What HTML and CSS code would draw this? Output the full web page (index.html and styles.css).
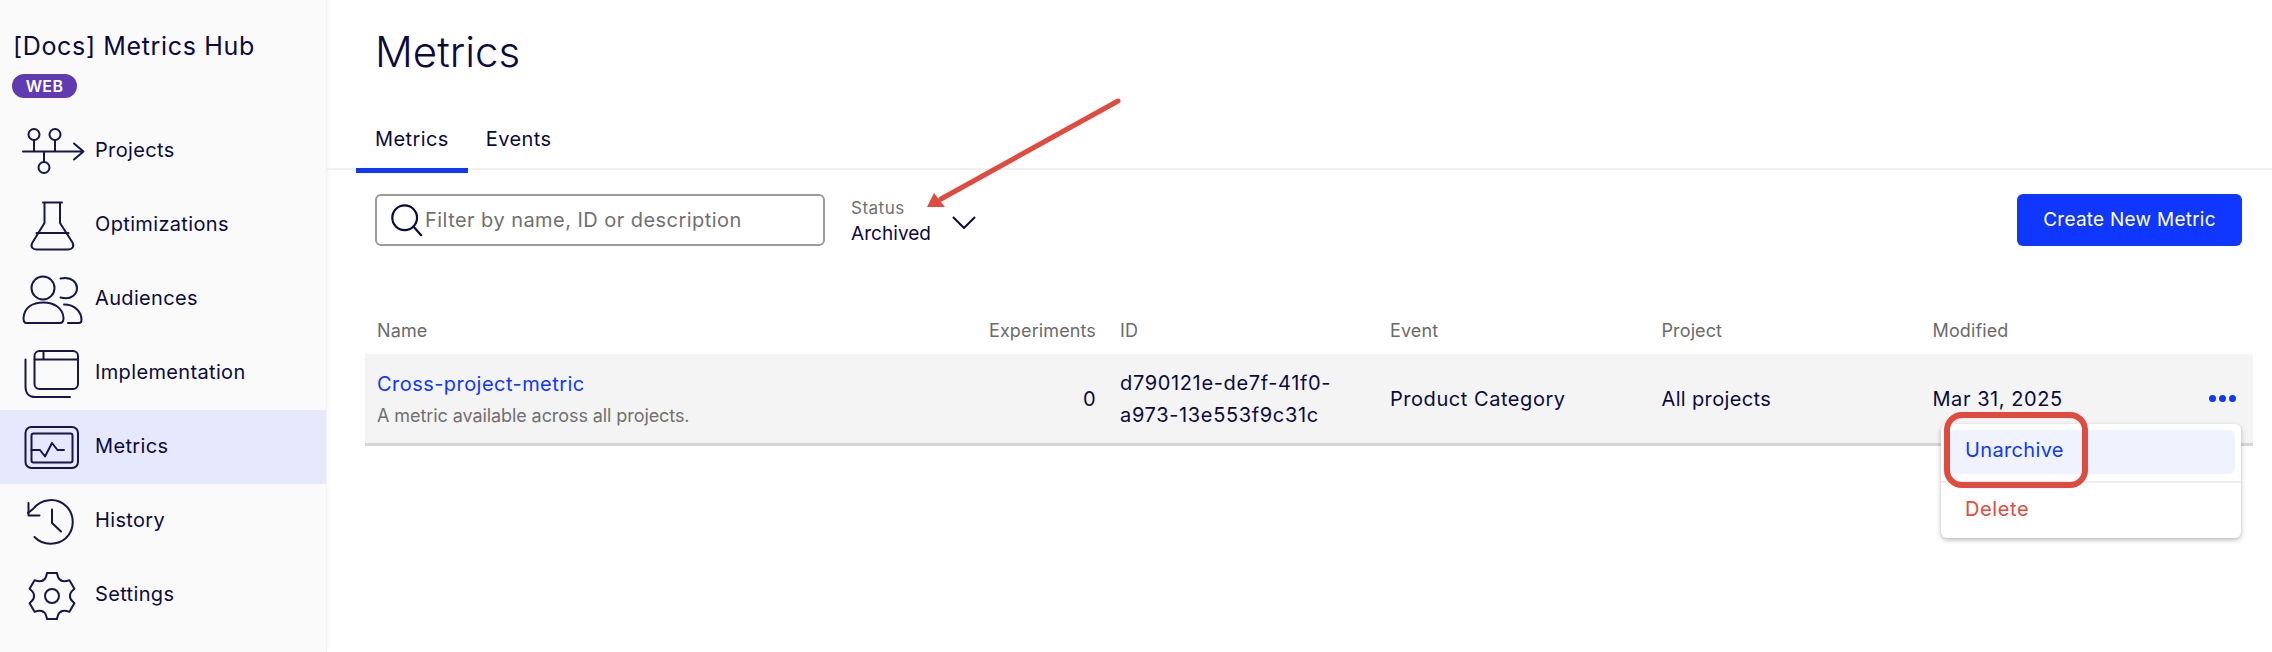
FILE: index.html
```html
<!DOCTYPE html>
<html lang="en">
<head>
<meta charset="utf-8">
<title>Metrics</title>
<link rel="stylesheet" href="styles.css">
</head>
<body>
<div class="app">
  <aside class="sidebar">
    <div class="brand">[Docs] Metrics Hub</div>
    <span class="badge">WEB</span>
    <nav class="nav">
      <a class="nav-item">
        <svg class="nav-icon" viewBox="0 2 68 74"><path d="M3 39.5H63M54 31.5l9.500 8-9.500 8M14 39.500V28M35 39.500V28M24 39.500V50"/><circle cx="14" cy="22.500" r="5.500"/><circle cx="35" cy="22.500" r="5.500"/><circle cx="24" cy="55.500" r="5.500"/></svg>
        <span class="nav-label">Projects</span>
      </a>
      <a class="nav-item">
        <svg class="nav-icon" viewBox="0 2 68 74"><path d="M23 16.500H42M24.500 16.500V37L12.500 56.500C10 60.500 12.500 63.500 16.500 63.500H48C52.500 63.500 54.500 60.500 52.500 56.500L40 37V16.500M16.500 47H48.500"/></svg>
        <span class="nav-label">Optimizations</span>
      </a>
      <a class="nav-item">
        <svg class="nav-icon" viewBox="0 2 68 74"><circle cx="23" cy="28" r="11.500"/><path d="M40.500 18.500C53 16 57 24 57 28C57 33.500 52 40.500 40.500 37.500M6.500 63C4 63 3.500 61 3.500 58C4.500 47 13 42.500 23.500 42.500C34 42.500 43 48 43.500 58C43.500 61 42.500 63 40 63ZM44 44.500C55 44.500 61.500 52 61.500 60C61.500 62 61 63 59 63H48"/></svg>
        <span class="nav-label">Audiences</span>
      </a>
      <a class="nav-item">
        <svg class="nav-icon" viewBox="0 2 68 74"><rect x="14.500" y="17" width="43.500" height="38" rx="5"/><path d="M14.500 25.500H58M23.500 17V25.500M5.500 25.500V53C5.500 59 9 63 15 63H50"/></svg>
        <span class="nav-label">Implementation</span>
      </a>
      <a class="nav-item active">
        <svg class="nav-icon" viewBox="0 0 68 74"><rect x="5.500" y="17" width="52.500" height="41" rx="6"/><rect x="11.500" y="23.500" width="41" height="29" rx="2"/><path d="M11.500 40H20L25 46.500L32 33L37.500 40H44"/></svg>
        <span class="nav-label">Metrics</span>
      </a>
      <a class="nav-item">
        <svg class="nav-icon" viewBox="0 2 68 74"><path d="M14.500 55C23 64 38 63.500 46 56C55 47.500 55 32.500 46 24C37 15.500 21.500 16 13 27L8 31"/><path d="M8.500 21V33.500H19.500M32 27.500V41L41 49.500"/></svg>
        <span class="nav-label">History</span>
      </a>
      <a class="nav-item">
        <svg class="nav-icon" viewBox="0 2 68 74">
          <g transform="translate(32 40)">
            <circle r="7"/>
            <path id="t" d="M-9 -15.600Q-6 -17-5 -23H5Q6 -17 9 -15.600"/>
            <use href="#t" transform="rotate(60)"/>
            <use href="#t" transform="rotate(120)"/>
            <use href="#t" transform="rotate(180)"/>
            <use href="#t" transform="rotate(240)"/>
            <use href="#t" transform="rotate(300)"/>
          </g>
        </svg>
        <span class="nav-label">Settings</span>
      </a>
    </nav>
  </aside>
  <main class="main">
    <h1 class="title">Metrics</h1>
    <div class="tabs">
      <a class="tab active">Metrics</a>
      <a class="tab">Events</a>
    </div>
    <div class="toolbar">
      <label class="search">
        <svg class="search-icon" viewBox="0 0 36 36"><circle cx="16" cy="15" r="13.500"/><path d="M25.500 24.500L34 34"/></svg>
        <span class="placeholder">Filter by name, ID or description</span>
      </label>
      <div class="status">
        <span class="status-label">Status</span>
        <span class="status-value">Archived</span>
      </div>
      <svg class="chevron" viewBox="0 0 24 13"><path d="M1 1L12 12L23 1"/></svg>
      <button class="create">Create New Metric</button>
    </div>
    <div class="table">
      <div class="grid head">
        <div class="cell">Name</div>
        <div class="cell num">Experiments</div>
        <div class="cell">ID</div>
        <div class="cell">Event</div>
        <div class="cell">Project</div>
        <div class="cell">Modified</div>
        <div class="cell"></div>
      </div>
      <div class="grid row">
        <div class="cell">
          <a class="metric-link">Cross-project-metric</a>
          <div class="metric-desc">A metric available across all projects.</div>
        </div>
        <div class="cell num">0</div>
        <div class="cell id">d790121e-de7f-41f0-<br>a973-13e553f9c31c</div>
        <div class="cell wide">Product Category</div>
        <div class="cell">All projects</div>
        <div class="cell wide">Mar 31, 2025</div>
        <div class="cell dots"><i></i><i></i><i></i></div>
        <div class="menu">
          <div class="menu-item hover">Unarchive</div>
          <div class="menu-sep"></div>
          <div class="menu-item danger">Delete</div>
          <div class="callout"></div>
        </div>
      </div>
    </div>
  </main>
  <svg class="arrow" viewBox="0 0 200 120"><path class="arrow-line" d="M193 6L16 104"/><path class="arrow-head" d="M2 112L9 98L20 112Z"/></svg>
</div>
</body>
</html>
```
FILE: styles.css
```css
* { box-sizing: border-box; }
html, body { margin: 0; height: 652px; overflow: hidden; background: #fff; }
body { font-family: Inter, "Liberation Sans", sans-serif; color: #0a0a3c; font-size: 20px; letter-spacing: .35px; }
.app { display: flex; height: 652px; position: relative; }
.sidebar { width: 327px; flex: none; background: #fafafa; border-right: 1px solid #f3f3f3; box-shadow: 1px 0 4px rgba(0,0,0,.04); }
.brand { font-size: 25px; line-height: 30px; margin: 31px 0 0 13px; letter-spacing: .65px; }
.badge { display: block; width: 65px; height: 24px; margin: 13px 0 0 12px; border-radius: 12px; background: #5f3ab0; color: #fff; font-size: 16px; font-weight: 600; line-height: 24px; text-align: center; }
.nav { margin-top: 16px; }
.nav-item { display: flex; align-items: center; height: 74px; padding-left: 20px; gap: 7px; }
.nav-item.active { background: #e6e9fd; }
.nav-label { margin-bottom: 3px; }
.nav-icon { width: 68px; height: 74px; flex: none; fill: none; stroke: #16164a; stroke-width: 2; stroke-linecap: round; stroke-linejoin: round; }
.main { flex: 1; min-width: 0; }
.title { margin: 0; height: 110px; padding: 22px 0 0 375px; margin-left: -327px; font-size: 42px; line-height: 60px; font-weight: 300; letter-spacing: 0; }
.tabs { display: flex; height: 60px; border-bottom: 2px solid #f0f0f0; padding-left: 29px; }
.tab { height: 63px; padding: 15px 19px 0; line-height: 28px; border-bottom: 5px solid transparent; margin-right: -1px; letter-spacing: .4px; }
.tab.active { border-bottom-color: #0f37ff; }
.toolbar { display: flex; align-items: center; height: 52px; margin-top: 24px; padding: 0 30px 0 48px; }
.search { display: flex; align-items: center; width: 450px; height: 52px; border: 2px solid #9b9b9b; border-radius: 6px; padding-left: 13px; gap: 2px; color: #707070; letter-spacing: .45px; }
.search-icon { width: 33px; height: 33px; fill: none; stroke: #0a0a3c; stroke-width: 2.400; stroke-linecap: round; }
.status { display: flex; flex-direction: column; margin-left: 26px; padding-top: 2px; }
.status-label { font-size: 17px; line-height: 25px; color: #707070; letter-spacing: .5px; }
.status-value { font-size: 19px; line-height: 25px; letter-spacing: .05px; }
.chevron { width: 24px; height: 13px; margin: 4px 0 0 21px; fill: none; stroke: #0a0a3c; stroke-width: 2; }
.create { margin-left: auto; width: 225px; height: 52px; border: 0; border-radius: 6px; background: #0f37ff; color: #fff; font: 400 19px/52px Inter, sans-serif; letter-spacing: .25px; padding: 0; }
.table { margin: 0 19px 0 38px; }
.grid { display: grid; grid-template-columns: 595px 148px 270px 271.500px 271px 232px 0; align-items: center; }
.head { height: 108px; align-content: end; padding-bottom: 9px; font-size: 18px; color: #6b6b6b; letter-spacing: .12px; }
.head .cell { line-height: 28px; }
.cell { padding: 0 12px; }
.num { text-align: right; }
.wide { letter-spacing: .55px; }
.row { height: 92px; background: #f4f4f4; border-bottom: 3px solid #d5d5d5; position: relative; grid-template-rows: 89px; }
.metric-link { display: block; color: #0f37ff; line-height: 30px; margin-top: 1px; letter-spacing: .45px; }
.metric-desc { font-size: 18px; line-height: 28px; color: #707070; margin-top: 3px; letter-spacing: -.08px; }
.id { line-height: 32px; letter-spacing: .65px; }
.dots { position: absolute; right: 17px; top: 41px; display: flex; gap: 3px; padding: 0; }
.dots i { width: 7px; height: 7px; border-radius: 50%; background: #0f37ff; }
.menu { position: absolute; top: 70px; right: 12px; width: 300px; height: 114px; background: #fff; border-radius: 6px; box-shadow: 0 2px 5px rgba(0,0,0,.28); padding: 6px 6px 0 8px; }
.menu-item { height: 44px; line-height: 40px; padding-left: 16px; border-radius: 6px; }
.menu-item.hover { background: #f0f3fd; color: #0f37ff; }
.menu-sep { height: 2px; background: #efefef; margin: 7px -6px 7px -8px; }
.menu-item.danger { color: #e04a3f; line-height: 38px; letter-spacing: .6px; }
.callout { position: absolute; left: 3px; top: -12px; width: 144px; height: 76px; border: 6px solid #e04a3f; border-radius: 18px; }
.arrow { position: absolute; left: 925px; top: 95px; width: 200px; height: 120px; }
.arrow-line { fill: none; stroke: #e04a3f; stroke-width: 5; stroke-linecap: round; }
.arrow-head { fill: #e04a3f; }
```
